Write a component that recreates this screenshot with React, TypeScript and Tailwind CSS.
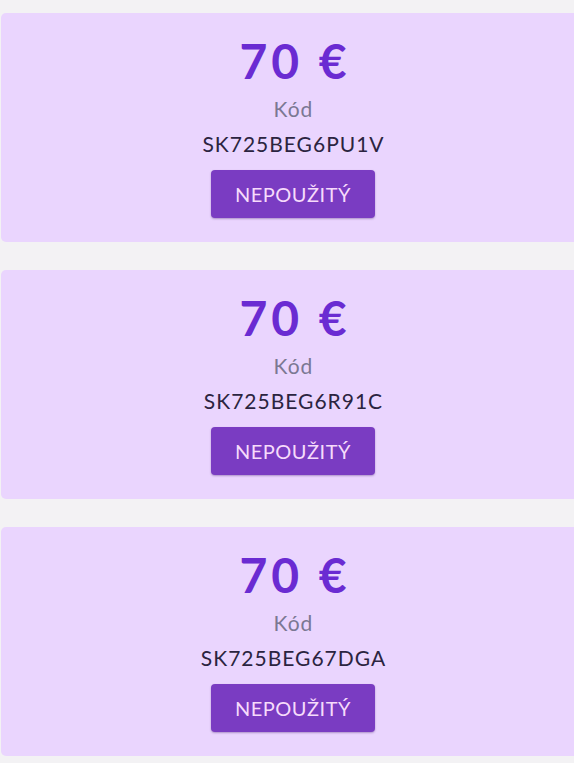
const vouchers = [
  { amount: '70 €', code: 'SK725BEG6PU1V' },
  { amount: '70 €', code: 'SK725BEG6R91C' },
  { amount: '70 €', code: 'SK725BEG67DGA' },
];

function VoucherCard({ amount, code }: { amount: string; code: string }) {
  return (
    <div className="ml-[1px] w-[584px] shrink-0 rounded-[5px] bg-[#ead5fe] pt-[24px] pb-[24px] flex flex-col items-center">
      <div className="pl-[4px] text-[48px] leading-[48px] font-bold tracking-[4px] text-[#6a2bd2]">{amount}</div>
      <div className="mt-[10px] pl-[1px] text-[21px] leading-[28px] tracking-[1px] text-[#7b7893]">Kód</div>
      <div className="mt-[7px] pl-[1px] text-[21px] leading-[28px] tracking-[1px] text-[#2b2440]">{code}</div>
      <button
        type="button"
        className="mt-[12px] w-[164px] h-[48px] rounded-[4px] bg-[#7a3cc2] text-[20px] tracking-[0.5px] text-[#f6dbfb] shadow-[0_1px_2px_rgba(60,20,100,0.35)]"
      >
        NEPOUŽITÝ
      </button>
    </div>
  );
}

export default function App() {
  return (
    <div className="w-[574px] h-[763px] overflow-hidden bg-[#f3f2f4] pt-[13px] flex flex-col gap-[28px] font-['Lato',sans-serif]">
      {vouchers.map((v) => (
        <VoucherCard key={v.code} amount={v.amount} code={v.code} />
      ))}
    </div>
  );
}
